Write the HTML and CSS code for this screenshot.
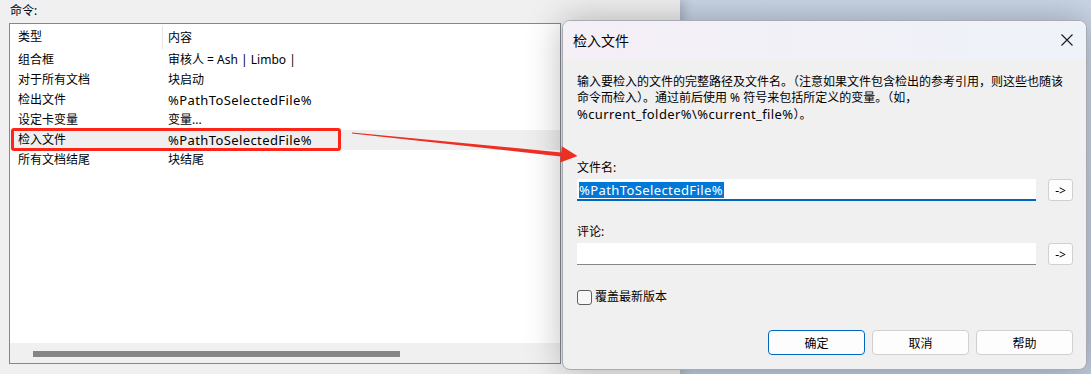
FILE: index.html
```html
<!DOCTYPE html>
<html lang="zh-CN">
<head>
    <meta charset="UTF-8">
    <title>检入文件</title>
    <link rel="stylesheet" href="styles.css">
</head>
<body>
    <div class="desktop">
        <div class="main-window">
            <div class="field-label">命令:</div>
            <div class="list-box">
                <div class="list-rows">
                    <div class="list-head">
                        <div class="col-type">类型</div>
                        <div class="col-content">内容</div>
                    </div>
                    <div class="list-row"><div class="col-type">组合框</div><div class="col-content">审核人 = Ash | Limbo |</div></div>
                    <div class="list-row"><div class="col-type">对于所有文档</div><div class="col-content">块启动</div></div>
                    <div class="list-row"><div class="col-type">检出文件</div><div class="col-content"><span class="var">%PathToSelectedFile%</span></div></div>
                    <div class="list-row"><div class="col-type">设定卡变量</div><div class="col-content">变量...</div></div>
                    <div class="list-row selected"><div class="col-type">检入文件</div><div class="col-content"><span class="var">%PathToSelectedFile%</span></div></div>
                    <div class="list-row"><div class="col-type">所有文档结尾</div><div class="col-content">块结尾</div></div>
                </div>
                <div class="hscroll"><div class="hscroll-thumb"></div></div>
            </div>
        </div>

        <!-- 对话框 -->
        <div class="dialog">
            <div class="dialog-title">
                <span>检入文件</span>
                <svg class="close-icon" width="12" height="12" viewBox="0 0 12 12">
                    <path d="M0.5 0.5 L11.5 11.5 M11.5 0.5 L0.5 11.5" stroke="#1a1a1a" stroke-width="1.1" fill="none"/>
                </svg>
            </div>
            <div class="dialog-body">
                <p class="description">输入要检入的文件的完整路径及文件名。（注意如果文件包含检出的参考引用，则这些也随该<br>命令而检入）。通过前后使用 % 符号来包括所定义的变量。（如，<br><span class="var">%current_folder%\%current_file%</span>）。</p>

                <div class="field-label dlg-label">文件名:</div>
                <div class="input-row">
                    <div class="text-input focused"><span class="sel var">%PathToSelectedFile%</span></div>
                    <button class="small-btn">-&gt;</button>
                </div>

                <div class="field-label dlg-label second">评论:</div>
                <div class="input-row">
                    <div class="text-input"></div>
                    <button class="small-btn">-&gt;</button>
                </div>

                <label class="check-row">
                    <span class="check-box"></span>
                    <span>覆盖最新版本</span>
                </label>

                <div class="button-row">
                    <button class="dlg-btn default">确定</button>
                    <button class="dlg-btn">取消</button>
                    <button class="dlg-btn">帮助</button>
                </div>
            </div>
        </div>

        <!-- 标注 -->
        <div class="mark-box"></div>
        <svg class="mark-arrow" width="1091" height="374" viewBox="0 0 1091 374">
            <polygon points="352,132.6 561.2,152.4 561.8,146.2 577.5,156 560.2,162.6 560.8,156.4 352,133.4" fill="#ee2e22"/>
        </svg>
    </div>
</body>
</html>
```

FILE: styles.css
```css
body {
    margin: 0;
    font-family: "Noto Sans", "Noto Sans CJK SC", sans-serif;
    font-size: 12px;
    color: #000000;
}

.desktop {
    position: relative;
    width: 1091px;
    height: 374px;
    overflow: hidden;
    background: linear-gradient(180deg, #cad6e6, #bdcbde); /* 桌面 */
}

.main-window {
    width: 680px;
    height: 374px;
    background-color: #f0f0f0;
    box-shadow: 3px 0 10px rgba(40, 50, 70, 0.25);
    padding-top: 3px;
    box-sizing: border-box;
}

.field-label {
    line-height: 16px;
    padding-left: 10px;
}

/* 变量名比中文字宽一点 */
.var {
    font-size: 13px;
    letter-spacing: 0.4px;
}

.list-box {
    margin: 4px 0 0 9px;
    width: 552px;
    height: 341px;
    border: 1px solid #828790;
    box-sizing: border-box;
    background-color: #ffffff;
    display: flex;
    flex-direction: column;
}

.list-rows {
    flex: 1;
}

.list-head,
.list-row {
    display: flex;
    align-items: center;
}

.list-head {
    height: 26px;
}

.list-row {
    height: 20px;
}

.list-row.selected {
    background-color: #efefef;
}

.col-type {
    width: 144px;
    padding-left: 8px;
    line-height: 16px;
}

.col-content {
    padding-left: 6px;
    line-height: 16px;
}

.list-head .col-content {
    border-left: 1px solid #e5e5e5;
    padding-left: 5px;
    height: 23px;
    line-height: 23px;
}

.hscroll {
    height: 20px;
    background-color: #f0f0f0;
    padding-top: 8px;
    box-sizing: border-box;
}

.hscroll-thumb {
    margin-left: 23px;
    width: 367px;
    height: 6px;
    background-color: #858585;
}

/* 对话框 */
.dialog {
    position: absolute;
    left: 562px;
    top: 20px;
    width: 525px;
    height: 350px;
    box-sizing: border-box;
    border: 1px solid #a8abb2;
    border-radius: 8px;
    background-color: #f0f0f0;
    box-shadow: 0 0 36px rgba(0, 0, 0, 0.28);
    overflow: hidden;
}

.dialog-title {
    height: 38px;
    display: flex;
    align-items: center;
    justify-content: space-between;
    padding: 0 13px 0 10px;
    font-size: 14px;
    background: linear-gradient(90deg, #f5eff6, #eef2f9);
}

.dialog-body {
    padding: 15px 13px 0 14px;
}

.description {
    margin: 0;
    line-height: 16px;
}

.dlg-label {
    padding-left: 0;
    margin-top: 37px;
}

.dlg-label.second {
    margin-top: 23px;
}

.input-row {
    display: flex;
    align-items: flex-start;
    gap: 12px;
    margin-top: 3px;
}

.text-input {
    width: 459px;
    height: 22px;
    box-sizing: border-box;
    background-color: #ffffff;
    border-bottom: 1px solid #868686;
    padding: 3px 0 0 2px;
}

.text-input.focused {
    border-bottom: 2px solid #0067c0;
}

.sel {
    display: inline-block;
    background-color: #0078d7;
    color: #ffffff;
    line-height: 16px;
    padding-right: 1px;
}

.small-btn {
    width: 25px;
    height: 22px;
    padding: 0;
    font-family: inherit;
    font-size: 12px;
    background-color: #fdfdfd;
    border: 1px solid #d0d0d0;
    border-radius: 3px;
}

.check-row {
    display: flex;
    align-items: center;
    gap: 3px;
    margin-top: 24px;
    line-height: 16px;
}

.check-box {
    width: 13px;
    height: 13px;
    border: 1px solid #606060;
    border-radius: 3px;
    background-color: #f7f7f7;
}

.button-row {
    display: flex;
    justify-content: flex-end;
    gap: 7px;
    margin-top: 25px;
}

.dlg-btn {
    width: 97px;
    height: 25px;
    font-family: inherit;
    font-size: 12px;
    background-color: #fdfdfd;
    border: 1px solid #d0d0d0;
    border-radius: 4px;
}

.dlg-btn.default {
    border-color: #0067c0;
}

/* 红色标注 */
.mark-box {
    position: absolute;
    left: 11px;
    top: 128px;
    width: 330px;
    height: 23px;
    box-sizing: border-box;
    border: 3px solid #ff2418;
    border-radius: 3px;
}

.mark-arrow {
    position: absolute;
    left: 0;
    top: 0;
    pointer-events: none;
}
```
